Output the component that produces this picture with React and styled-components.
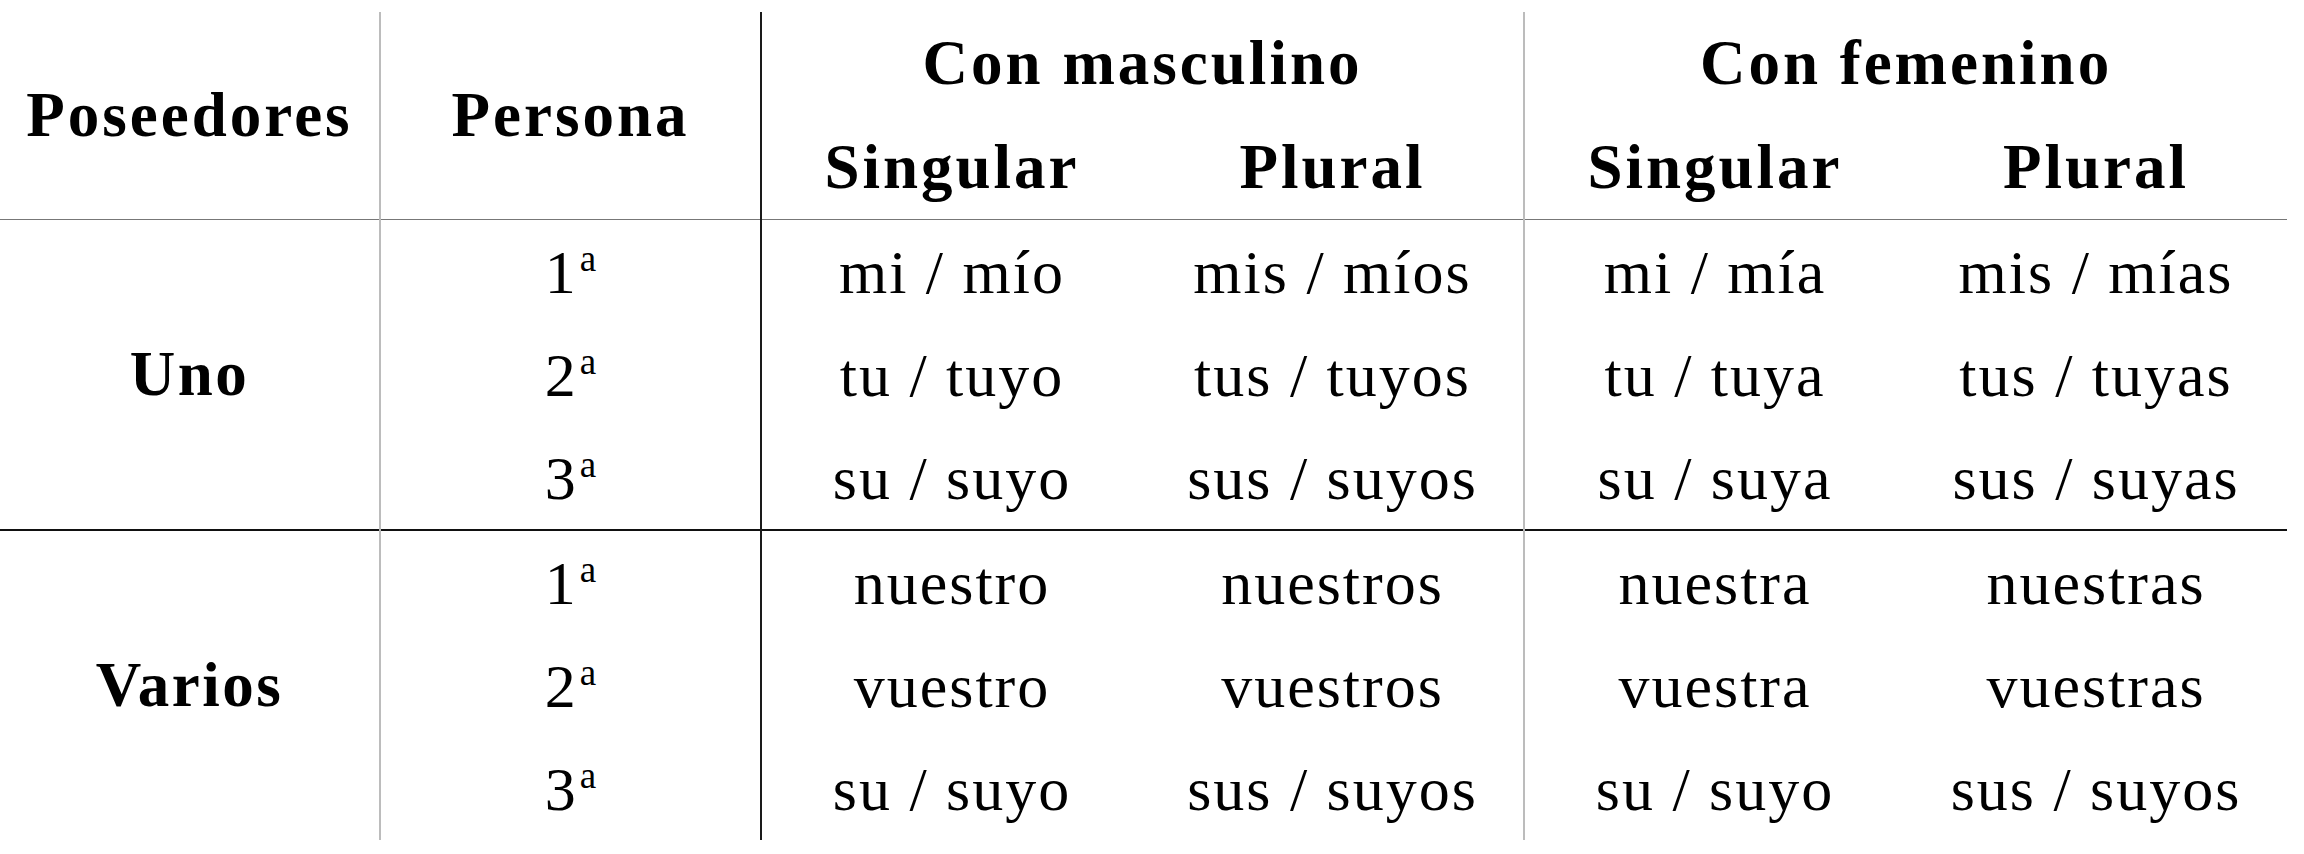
import React from "react";
import styled, { createGlobalStyle, css } from "styled-components";

const Global = createGlobalStyle`
  html, body { margin: 0; padding: 0; background: #fff; }
  body { font-family: "Liberation Serif", "Times New Roman", serif; color: #000; }
`;

const Page = styled.div`
  padding-top: 12px;
  width: 2304px;
`;

const Table = styled.table`
  border-collapse: collapse;
  table-layout: fixed;
  width: 2287px;
`;

const rightBorder = css`
  ${({ $right }) =>
    $right === "light"
      ? "border-right: 2px solid #bcbcbc;"
      : $right === "dark"
      ? "border-right: 2px solid #1a1a1a;"
      : ""}
`;

const HeadCell = styled.th`
  font-weight: 700;
  font-size: 63px;
  letter-spacing: 3px;
  text-align: center;
  vertical-align: middle;
  padding: 0;
  height: 103.5px;
  line-height: 1;
  white-space: nowrap;
  ${rightBorder}
  ${({ $bottom }) => ($bottom ? "border-bottom: 1.5px solid #777;" : "")}
`;

const Row = styled.tr`
  ${({ $sep }) => ($sep ? "border-top: 2px solid #111;" : "")}
`;

const GroupCell = styled.td`
  font-weight: 700;
  font-size: 63px;
  letter-spacing: 2.5px;
  text-align: center;
  vertical-align: middle;
  padding: 0;
  ${rightBorder}
`;

const Cell = styled.td`
  font-size: 62px;
  letter-spacing: 2px;
  text-align: center;
  vertical-align: middle;
  padding: 0;
  height: 103px;
  line-height: 1;
  white-space: nowrap;
  ${rightBorder}
`;

const Ord = styled.sup`
  font-size: 37px;
  vertical-align: 22px;
  line-height: 0;
  margin-left: 2px;
  letter-spacing: 0;
`;

const groups = [
  {
    name: "Uno",
    rows: [
      ["1", "mi / mío", "mis / míos", "mi / mía", "mis / mías"],
      ["2", "tu / tuyo", "tus / tuyos", "tu / tuya", "tus / tuyas"],
      ["3", "su / suyo", "sus / suyos", "su / suya", "sus / suyas"],
    ],
  },
  {
    name: "Varios",
    rows: [
      ["1", "nuestro", "nuestros", "nuestra", "nuestras"],
      ["2", "vuestro", "vuestros", "vuestra", "vuestras"],
      ["3", "su / suyo", "sus / suyos", "su / suyo", "sus / suyos"],
    ],
  },
];

export default function App() {
  return (
    <Page>
      <Global />
      <Table>
        <colgroup>
          <col style={{ width: 380 }} />
          <col style={{ width: 381 }} />
          <col style={{ width: 381 }} />
          <col style={{ width: 382 }} />
          <col style={{ width: 381 }} />
          <col style={{ width: 382 }} />
        </colgroup>
        <thead>
          <tr>
            <HeadCell rowSpan={2} $right="light" $bottom>
              Poseedores
            </HeadCell>
            <HeadCell rowSpan={2} $right="dark" $bottom>
              Persona
            </HeadCell>
            <HeadCell colSpan={2} $right="light">
              Con masculino
            </HeadCell>
            <HeadCell colSpan={2}>Con femenino</HeadCell>
          </tr>
          <tr>
            <HeadCell $bottom>Singular</HeadCell>
            <HeadCell $bottom $right="light">
              Plural
            </HeadCell>
            <HeadCell $bottom>Singular</HeadCell>
            <HeadCell $bottom>Plural</HeadCell>
          </tr>
        </thead>
        <tbody>
          {groups.map((g, gi) =>
            g.rows.map((r, ri) => (
              <Row key={`${gi}-${ri}`} $sep={gi > 0 && ri === 0}>
                {ri === 0 && (
                  <GroupCell rowSpan={3} $right="light">
                    {g.name}
                  </GroupCell>
                )}
                <Cell $right="dark">
                  {r[0]}
                  <Ord>a</Ord>
                </Cell>
                <Cell>{r[1]}</Cell>
                <Cell $right="light">{r[2]}</Cell>
                <Cell>{r[3]}</Cell>
                <Cell>{r[4]}</Cell>
              </Row>
            ))
          )}
        </tbody>
      </Table>
    </Page>
  );
}
